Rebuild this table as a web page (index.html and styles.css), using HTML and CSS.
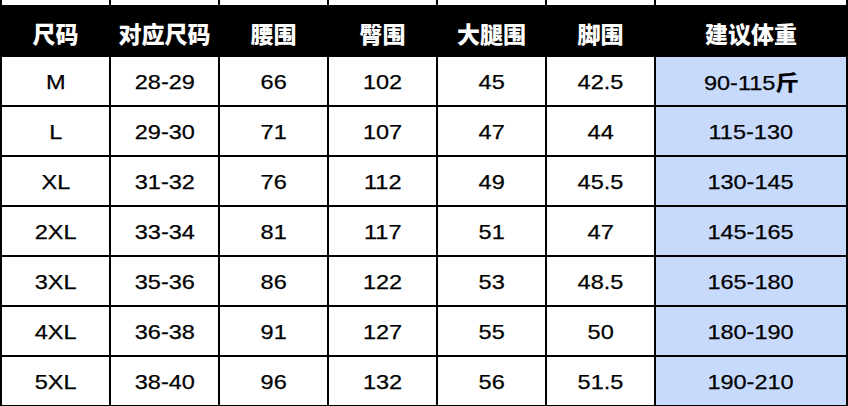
FILE: index.html
```html
<!DOCTYPE html>
<html lang="zh-CN">
<head>
<meta charset="utf-8">
<title>尺码表</title>
<link rel="stylesheet" href="styles.css">
</head>
<body>
<div class="sheet">
  <div class="cell strip"></div><div class="cell strip"></div><div class="cell strip"></div><div class="cell strip"></div><div class="cell strip"></div><div class="cell strip"></div><div class="cell strip"></div>

  <div class="cell head">尺码</div>
  <div class="cell head">对应尺码</div>
  <div class="cell head">腰围</div>
  <div class="cell head">臀围</div>
  <div class="cell head">大腿围</div>
  <div class="cell head">脚围</div>
  <div class="cell head">建议体重</div>

  <div class="cell"><span class="v">M</span></div>
  <div class="cell"><span class="v">28-29</span></div>
  <div class="cell"><span class="v">66</span></div>
  <div class="cell"><span class="v">102</span></div>
  <div class="cell"><span class="v">45</span></div>
  <div class="cell"><span class="v">42.5</span></div>
  <div class="cell blue"><span class="v">90-115<span class="cjk">斤</span></span></div>

  <div class="cell"><span class="v">L</span></div>
  <div class="cell"><span class="v">29-30</span></div>
  <div class="cell"><span class="v">71</span></div>
  <div class="cell"><span class="v">107</span></div>
  <div class="cell"><span class="v">47</span></div>
  <div class="cell"><span class="v">44</span></div>
  <div class="cell blue"><span class="v">115-130</span></div>

  <div class="cell"><span class="v">XL</span></div>
  <div class="cell"><span class="v">31-32</span></div>
  <div class="cell"><span class="v">76</span></div>
  <div class="cell"><span class="v">112</span></div>
  <div class="cell"><span class="v">49</span></div>
  <div class="cell"><span class="v">45.5</span></div>
  <div class="cell blue"><span class="v">130-145</span></div>

  <div class="cell"><span class="v">2XL</span></div>
  <div class="cell"><span class="v">33-34</span></div>
  <div class="cell"><span class="v">81</span></div>
  <div class="cell"><span class="v">117</span></div>
  <div class="cell"><span class="v">51</span></div>
  <div class="cell"><span class="v">47</span></div>
  <div class="cell blue"><span class="v">145-165</span></div>

  <div class="cell"><span class="v">3XL</span></div>
  <div class="cell"><span class="v">35-36</span></div>
  <div class="cell"><span class="v">86</span></div>
  <div class="cell"><span class="v">122</span></div>
  <div class="cell"><span class="v">53</span></div>
  <div class="cell"><span class="v">48.5</span></div>
  <div class="cell blue"><span class="v">165-180</span></div>

  <div class="cell"><span class="v">4XL</span></div>
  <div class="cell"><span class="v">36-38</span></div>
  <div class="cell"><span class="v">91</span></div>
  <div class="cell"><span class="v">127</span></div>
  <div class="cell"><span class="v">55</span></div>
  <div class="cell"><span class="v">50</span></div>
  <div class="cell blue"><span class="v">180-190</span></div>

  <div class="cell"><span class="v">5XL</span></div>
  <div class="cell"><span class="v">38-40</span></div>
  <div class="cell"><span class="v">96</span></div>
  <div class="cell"><span class="v">132</span></div>
  <div class="cell"><span class="v">56</span></div>
  <div class="cell"><span class="v">51.5</span></div>
  <div class="cell blue"><span class="v">190-210</span></div>
</div>
</body>
</html>
```
FILE: styles.css
```css
html, body {
  margin: 0;
  padding: 0;
  background: #ffffff;
}

.sheet {
  width: 848px;
  box-sizing: border-box;
  display: grid;
  grid-template-columns: repeat(6, 107px) 190px;
  grid-template-rows: 5px repeat(8, 48px);
  gap: 2px;
  padding: 0 2px 2px 2px;
  background: #000000;
}

.cell {
  background: #ffffff;
  display: flex;
  align-items: center;
  justify-content: center;
  font-family: "Liberation Sans", Arial, sans-serif;
  font-size: 21px;
  color: #000000;
  overflow: hidden;
}

.strip {
  background: #ffffff;
}

.head {
  background: #000000;
  color: #ffffff;
  font-family: "Noto Sans CJK SC", "Noto Sans", sans-serif;
  font-weight: 900;
  font-size: 23px;
  padding-top: 3px;
  box-sizing: border-box;
}

.blue {
  background: #c7dafc;
}

.v {
  display: inline-block;
  transform: scaleX(1.12);
  line-height: 1;
  padding-top: 1px;
  -webkit-text-stroke: 0.25px #000000;
}

.cjk {
  font-family: "Noto Sans CJK SC", sans-serif;
  font-weight: 700;
  font-size: 21px;
}
```
